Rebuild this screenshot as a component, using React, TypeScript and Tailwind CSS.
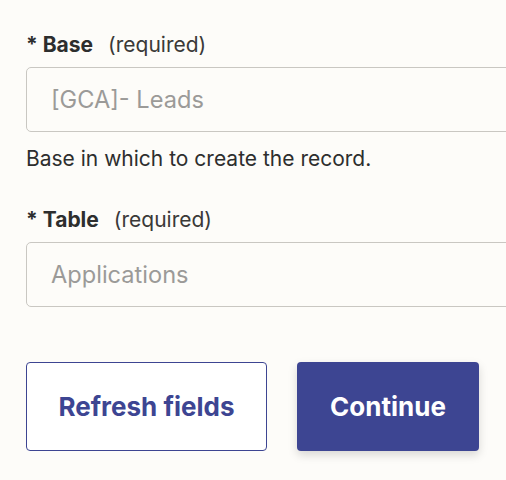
import React from "react";

export default function App() {
  return (
    <div className="w-[506px] h-[480px] overflow-hidden bg-[#fdfcf9] font-['Inter',sans-serif] text-[#2d2e2e]">
      <div className="pl-[26px] pt-[31px]">
        <div className="flex items-baseline text-[21px] leading-[28px]">
          <span className="font-bold">* Base</span>
          <span className="ml-[15px] text-[#3a3938]">(required)</span>
        </div>
        <div className="mt-[8px] w-[520px] h-[65px] rounded-[5px] border border-[#c9c7c2] bg-[#fdfcf9] flex items-center pl-[24px] text-[23.6px] text-[#9b9a98]">
          [GCA]- Leads
        </div>
        <div className="mt-[14px] text-[21px] leading-[26px] text-[#2d2e2e]">
          Base in which to create the record.
        </div>
        <div className="mt-[34px] flex items-baseline text-[21px] leading-[28px]">
          <span className="font-bold">* Table</span>
          <span className="ml-[15px] text-[#3a3938]">(required)</span>
        </div>
        <div className="mt-[8px] w-[520px] h-[65px] rounded-[5px] border border-[#c9c7c2] bg-[#fdfcf9] flex items-center pl-[24px] text-[23.6px] text-[#9b9a98]">
          Applications
        </div>
        <div className="mt-[55px] flex gap-[30px]">
          <button className="w-[241px] h-[89px] rounded-[4px] border-[1.5px] border-[#3d4592] bg-white text-[26px] font-bold text-[#3d4592]">
            Refresh fields
          </button>
          <button className="w-[182px] h-[89px] rounded-[4px] bg-[#3d4592] text-[26px] font-bold text-white shadow-[0_4px_10px_rgba(0,0,0,0.15)]">
            Continue
          </button>
        </div>
      </div>
    </div>
  );
}
